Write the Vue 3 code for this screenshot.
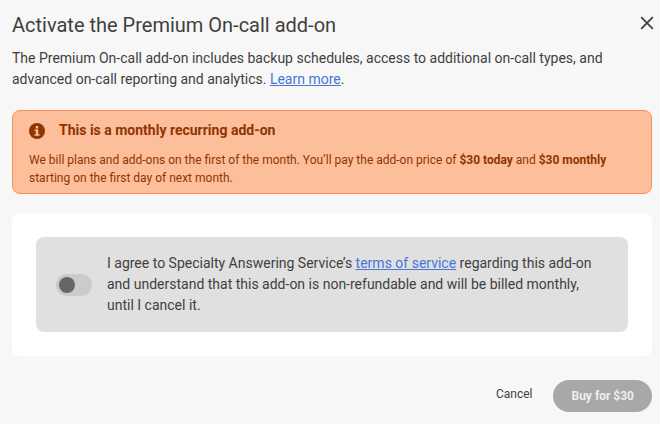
<script setup>
import { ref } from 'vue'

const price = 30
const agreed = ref(false)
</script>

<template>
  <main class="dialog" role="dialog" aria-labelledby="dialog-title">
    <header class="header">
      <h1 id="dialog-title" class="title">Activate the Premium On-call add-on</h1>
      <button class="close" type="button" aria-label="Close">
        <svg width="14" height="14" viewBox="0 0 14 14" aria-hidden="true">
          <path d="M1.2 1.2 12.8 12.8M12.8 1.2 1.2 12.8" fill="none" stroke="currentColor" stroke-width="1.7" />
        </svg>
      </button>
    </header>

    <p class="intro">
      The Premium On-call add-on includes backup schedules, access to additional on-call types, and
      advanced on-call reporting and analytics. <a href="#learn">Learn more</a>.
    </p>

    <section class="notice">
      <h2 class="notice-title">
        <svg width="16" height="16" viewBox="0 0 16 16" aria-hidden="true">
          <circle cx="8" cy="8" r="8" fill="currentColor" />
          <path fill="#fdbe9b" d="M6.7 3.1h2.5v2.3H6.7zM5.6 6.5h3.7v4.7h1.3v1.6H5.4v-1.6h1.4V8.1H5.6z" />
        </svg>
        This is a monthly recurring add-on
      </h2>
      <p class="notice-text">
        We bill plans and add-ons on the first of the month. You’ll pay the add-on price of
        <strong>${{ price }} today</strong> and <strong>${{ price }} monthly</strong> starting on the
        first day of next month.
      </p>
    </section>

    <section class="card">
      <div class="consent">
        <input id="agree" v-model="agreed" class="switch" type="checkbox" role="switch" />
        <label for="agree">
          I agree to Specialty Answering Service’s <a href="#terms">terms of service</a> regarding this
          add-on and understand that this add-on is non-refundable and will be billed monthly, until I
          cancel it.
        </label>
      </div>
    </section>

    <footer class="footer">
      <button class="cancel" type="button">Cancel</button>
      <button class="buy" type="button" :disabled="!agreed">Buy for ${{ price }}</button>
    </footer>
  </main>
</template>

<style>
body {
  background: #f7f7f7;
}
</style>

<style scoped>
.dialog {
  padding: 10px 8px 12px 12px;
  color: #3f3f3f;
  font-family: Roboto, "Liberation Sans", sans-serif;
  font-size: 14px;
  line-height: 21px;
}

h1,
h2,
p {
  margin: 0;
}

a {
  color: #4775d9;
  text-decoration: underline;
}

button {
  border: 0;
  padding: 0;
  background: none;
  color: inherit;
  font: inherit;
}

.header {
  display: flex;
  justify-content: space-between;
  align-items: flex-start;
}

.title {
  font-size: 20px;
  font-weight: 400;
  line-height: 30px;
}

.close {
  display: flex;
  padding: 6px 0;
  margin-right: -2px;
}

.intro {
  margin-top: 8px;
  padding-right: 24px;
}

.notice {
  margin-top: 20px;
  padding: 9px 16px 6px;
  border: 1px solid #fc8f4d;
  border-radius: 8px;
  background: #fdbe9b;
  color: #8f3500;
}

.notice-title {
  display: flex;
  align-items: center;
  gap: 14px;
  font-size: 14px;
  font-weight: 700;
  line-height: 21px;
}

.notice-text {
  margin-top: 10px;
  font-size: 12px;
  line-height: 18px;
}

.card {
  margin-top: 19px;
  padding: 24px;
  border-radius: 8px;
  background: #fff;
}

.consent {
  display: flex;
  align-items: center;
  gap: 15px;
  padding: 16px 20px;
  border-radius: 8px;
  background: #e0e0e0;
}

.switch {
  flex: none;
  display: flex;
  align-items: center;
  width: 36px;
  height: 22px;
  margin: 0;
  padding: 3px;
  border-radius: 11px;
  background: #cbcbcb;
  appearance: none;
}

.switch::before {
  content: "";
  width: 16px;
  height: 16px;
  border-radius: 50%;
  background: #666;
}

.switch:checked {
  justify-content: flex-end;
}

.footer {
  display: flex;
  justify-content: flex-end;
  gap: 21px;
  margin-top: 24px;
  font-size: 12px;
}

.cancel {
  padding-bottom: 4px;
}

.buy {
  height: 32px;
  padding: 0 18px;
  border-radius: 16px;
  background: #4775d9;
  color: #fff;
  font-weight: 700;
}

.buy:disabled {
  background: #a8a8a8;
  color: #eee;
}
</style>
